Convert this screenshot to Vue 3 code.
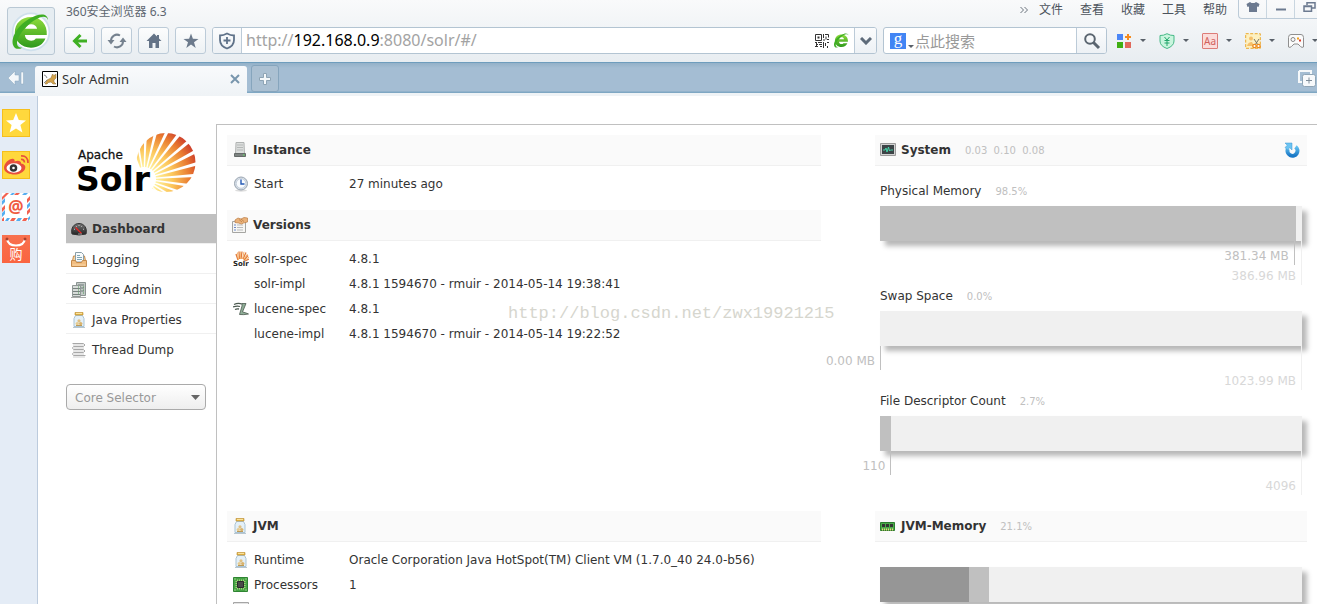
<template>
  <div class="browser">
    <svg class="sprite" aria-hidden="true">
      <defs>
        <linearGradient id="g-green" x1="0" y1="0" x2="0" y2="1">
          <stop offset="0" stop-color="#8fdc3c" />
          <stop offset="1" stop-color="#2f9a1c" />
        </linearGradient>
        <radialGradient id="g-sun" gradientUnits="userSpaceOnUse" cx="68" cy="46" r="64">
          <stop offset="0.2" stop-color="#fff09a" />
          <stop offset="0.45" stop-color="#fcc75c" />
          <stop offset="0.72" stop-color="#e8792f" />
          <stop offset="0.95" stop-color="#c42a2b" />
        </radialGradient>
        <linearGradient id="g-gauge" x1="0" y1="0" x2="0" y2="1">
          <stop offset="0" stop-color="#777" />
          <stop offset="1" stop-color="#222" />
        </linearGradient>
        <linearGradient id="g-refresh" x1="0" y1="0" x2="0" y2="1">
          <stop offset="0" stop-color="#63c1f0" />
          <stop offset="1" stop-color="#1a78c6" />
        </linearGradient>
        <clipPath id="c-sun"><circle cx="90" cy="29.5" r="29.5" /></clipPath>
      </defs>
      <symbol id="i-dashboard" viewBox="0 0 16 16">
        <path d="M1 13C-.5 7 3 2.500 8 2.500S16.500 7 15 13Q8 15 1 13z" fill="url(#g-gauge)" stroke="#333" />
        <path d="M3 8l1 .5M5 5l.7.800M8 4v1M11 5l-.7.800M13 8l-1 .5" stroke="#ddd" stroke-width=".8" />
        <path d="M4.500 6.500l6 6" stroke="#e22" stroke-width="1.200" />
        <path d="M7 12.500h4v1H7z" fill="#999" />
      </symbol>
      <symbol id="i-logging" viewBox="0 0 16 16">
        <path d="M1.500 9l1-5h11l1 5" fill="#f8d7a6" stroke="#c58a4a" />
        <path d="M4.500.5h6l2 2V10h-8z" fill="#f7fafb" stroke="#8a9fa8" />
        <path d="M6 3.500h3M6 5.500h5M6 7.500h5" stroke="#7fa6b5" />
        <path d="M.5 8.500h4l1 2h5l1-2h4v6H.5z" fill="#f2bd80" stroke="#c58a4a" />
        <path d="M1.500 13h13" stroke="#f9d9ab" />
      </symbol>
      <symbol id="i-cores" viewBox="0 0 16 16">
        <path d="M5.500.5h9v13h-9z" fill="#c3c9c7" stroke="#8b9492" />
        <path d="M7 3h6M7 6h6M7 9h6" stroke="#6d7b78" />
        <path d="M1.500 3.500h8v11h-8z" fill="#d8dcda" stroke="#909896" />
        <path d="M2 6.500h7M2 9.500h7M2 12.500h7" stroke="#78827f" />
        <path d="M7 5h1M7 8h1M7 11h1M12 5h1M12 8h1M12 11h1" stroke="#4d9b52" />
        <path d="M0 15.500h15" stroke="#aaa" />
      </symbol>
      <symbol id="i-jar" viewBox="0 0 16 16">
        <path d="M4.500 3.500h7l1.500 3v8H3v-8z" fill="#e4f0f8" stroke="#a9c3d4" />
        <path d="M4 .5h8v2.500H4z" fill="#e9b94c" stroke="#b98a2b" stroke-width=".6" />
        <path d="M5 1.500h6" stroke="#fbe39b" />
        <circle cx="8" cy="8.800" r="1.600" fill="#e0c083" />
        <circle cx="6.300" cy="11.600" r="1.700" fill="#e6cb90" />
        <circle cx="9.700" cy="11.600" r="1.700" fill="#d9b36c" />
        <path d="M5 13.500h6" stroke="#bd9a56" />
        <path d="M2 15.500h12" stroke="#b8c6cf" />
      </symbol>
      <symbol id="i-threads" viewBox="0 0 16 16">
        <g fill="none" stroke="#a8a8a8">
          <path d="M1.500 1.500h11q3 1.500 0 3h-10q-2 1.500 0 3h10q3 1.500 0 3h-10q-2 1.500 0 3h12" />
          <path d="M2 3h11M3 6h10M2 9h11M3 12h10M2 15h12" stroke="#cfcfcf" />
        </g>
      </symbol>
      <symbol id="i-server" viewBox="0 0 16 16">
        <path d="M4 .5h8l.5 12h-9z" fill="#dcdedd" stroke="#b0b3b2" />
        <path d="M5 3h6M5 5.500h6M5 8h6" stroke="#b5b8b7" />
        <path d="M2.500 11.500h11v3h-11z" fill="#7d8381" stroke="#656a68" />
        <path d="M11 13h1.500" stroke="#5be35b" />
      </symbol>
      <symbol id="i-clock" viewBox="0 0 16 16">
        <ellipse cx="8" cy="14.500" rx="6" ry="1.200" fill="#ddd" />
        <circle cx="8" cy="7.500" r="6.500" fill="#d5dde6" stroke="#9aa5b1" />
        <circle cx="8" cy="7.500" r="4.700" fill="#f9fcff" stroke="#b3c0cd" stroke-width=".6" />
        <path d="M8 3.500v4.500h3.500" fill="none" stroke="#2459b5" stroke-width="1.400" />
      </symbol>
      <symbol id="i-versions" viewBox="0 0 16 16">
        <path d="M.5 4.500h13v11H.5z" fill="#f6f6f4" stroke="#a5a5a2" />
        <path d="M2 8h2M2 10.500h2M2 13h2" stroke="#6c87c7" />
        <path d="M5 8h6M5 10.500h6M5 13h6" stroke="#bbb" />
        <path d="M3 3l3-2 3 1 3-1.500 3.500.5v4l-4 1-2 1-3-1-3.500-.5z" fill="#eab27a" stroke="#bb7d45" stroke-width=".7" />
        <path d="M7 2.500l3 2.500M9 2l3 2.500" stroke="#ab6c33" stroke-width=".6" />
      </symbol>
      <symbol id="i-solr" viewBox="0 0 16 16">
        <g stroke="#e27a3b" stroke-width="1.300">
          <path d="M5 9L3 3M6.500 8L6 .5M8 8l1-7.500M10 8l3-6.500M11 9l4-4.500M12 10l4-2" />
        </g>
        <path d="M5.500 9L4.500 1.500M7.300 8V.5M9.500 8L11 .8M10.800 8.500L14.500 3M11.500 9.500L16 6" stroke="#f7b062" stroke-width="1" />
        <text x="0" y="15" class="mini-text">Solr</text>
      </symbol>
      <symbol id="i-lucene" viewBox="0 0 16 16">
        <path d="M1 3.500q4-2 8-.5M0 6q4-1.500 7-.5M2 8.500q2-1 4-.5" fill="none" stroke="#4c5a50" stroke-width="1.300" />
        <path d="M9 2.500h4L9.500 11q3 .5 6 2-5 1-9 .5L9 5z" fill="#8fae97" stroke="#4c5a50" stroke-width=".8" />
      </symbol>
      <symbol id="i-monitor" viewBox="0 0 16 16">
        <path d="M.5 1.500h15v12H.5z" fill="#d2d2d2" stroke="#9a9a9a" />
        <path d="M2 3h12v9H2z" fill="#3c4447" />
        <path d="M3 8h2l1-2 1 4 1.500-5 1 4 1-1h2.500" fill="none" stroke="#45e0b0" stroke-width=".9" />
      </symbol>
      <symbol id="i-memory" viewBox="0 0 16 16">
        <path d="M.5 4.500h14v8H.5z" fill="#4aa84a" stroke="#2b7d2e" />
        <path d="M2 6h3v3H2zM6 6h3v3H6zM10 6h3v3h-3z" fill="#333" />
        <path d="M2 11.500h12" stroke="#f0d67a" stroke-width="2" stroke-dasharray="1 1" />
      </symbol>
      <symbol id="i-chip" viewBox="0 0 16 16">
        <path d="M.5.5h14v14H.5z" fill="#46a446" stroke="#2f8532" />
        <path d="M4 3.500h8M4 11.500h8" stroke="#a9cf7d" stroke-width="2" stroke-dasharray="1 1" />
        <path d="M3.500 4v8M11.500 4v8" stroke="#a9cf7d" stroke-width="2" stroke-dasharray="1 1" />
        <path d="M4.500 4.500h6v6h-6z" fill="#4a4a4a" stroke="#2a2a2a" />
        <path d="M1.500 1.500h1v1h-1zM12.500 1.500h1v1h-1zM1.500 12.500h1v1h-1zM12.500 12.500h1v1h-1z" fill="#e8f5c0" />
      </symbol>
      <symbol id="i-box" viewBox="0 0 16 16">
        <path d="M.5.5h15v15H.5z" fill="#e4e4e4" stroke="#a5a5a5" />
      </symbol>
      <symbol id="i-e" viewBox="0 0 48 48">
        <path d="M24 8C13 8 5.500 15.500 5.500 25.500S13 43 24 43c8 0 14-4 16.500-10.500H29.500c-1.200 1.700-3 2.500-5.300 2.500-4 0-6.700-2.300-7.200-6.500h25C43 16.500 35 8 24 8zM17.300 21.500c.9-3.500 3.400-5.300 6.900-5.300s6 1.800 6.800 5.300z" fill="url(#g-green)" />
        <path d="M43.500 11.500C43 3.500 34 3 22 10 8 18 0 33 4 41c1.500 3.500 6 4.500 10 2-6 0-7.500-4.500-4.500-11C14 22 25 12 34 8.500c5-1.800 8.500-.5 9.500 3z" fill="#3fae24" />
      </symbol>
    </svg>

    <header class="chrome">
      <button class="brand" type="button" aria-label="360">
        <svg width="42" height="42" viewBox="0 0 48 48">
          <circle cx="24" cy="25" r="21" fill="#fff" stroke="#cfe0ec" stroke-width="2" />
          <use href="#i-e" />
        </svg>
      </button>
      <div class="chrome-body">
        <div class="title-row">
          <span class="title">360安全浏览器 6.3</span>
          <nav class="menu">
            <svg width="10" height="10" viewBox="0 0 10 10" fill="none" stroke="#6a727c"><path d="M1.500 2l3 3-3 3M5.500 2l3 3-3 3" /></svg>
            <a v-for="m in menus" :key="m" href="#">{{ m }}</a>
          </nav>
          <div class="win-buttons">
            <button type="button" aria-label="skin">
              <svg width="14" height="14" viewBox="0 0 14 14"><path d="M4 2l1.500 1h3L10 2l3.500 2-1 3-1.500-.5V12H3V6.500L1.500 7l-1-3z" fill="#6c7a90" /></svg>
            </button>
            <button type="button" aria-label="minimize">
              <svg width="14" height="14" viewBox="0 0 14 14"><path d="M2 9.500h10" stroke="#6c7a90" stroke-width="2" /></svg>
            </button>
            <button type="button" aria-label="restore">
              <svg width="14" height="14" viewBox="0 0 14 14" fill="none" stroke="#6c7a90" stroke-width="1.500"><path d="M5 5V2.700h8V8h-3M2 6h7.500v5.300H2zM2 6.500h7.500" /></svg>
            </button>
          </div>
        </div>
        <div class="tool-row">
          <div class="nav-buttons">
            <button type="button" aria-label="back">
              <svg width="16" height="16" viewBox="0 0 16 16" fill="none" stroke="#3fb023" stroke-width="3"><path d="M15 8H3M8.500 2L2.500 8l6 6" /></svg>
            </button>
            <button type="button" aria-label="reload">
              <svg width="20" height="18" viewBox="0 0 20 18" fill="none" stroke="#76828f" stroke-width="2"><path d="M4 9a6 6 0 0 1 9-5.500M16 9a6 6 0 0 1-9 5.500" /><path d="M.5 8h7L4 12.500zM12.500 10h7L16 5.500z" fill="#76828f" stroke="none" /></svg>
            </button>
            <button type="button" aria-label="home">
              <svg width="18" height="18" viewBox="0 0 18 18"><path d="M9 1.500L1.500 9H4v7h3.500v-5h3v5H14V9h2.500L14 6.500V3h-2v1.500z" fill="#647387" /></svg>
            </button>
            <button type="button" aria-label="favorite">
              <svg width="18" height="18" viewBox="0 0 18 18"><path d="M9 1.500l1.900 5.300 5.600.1-4.500 3.400 1.700 5.600L9 12.600l-4.700 3.300L6 10.300 1.500 6.900l5.600-.1z" fill="#6c7a8c" /></svg>
            </button>
          </div>
          <div class="field address">
            <button class="seg left" type="button" aria-label="security">
              <svg width="18" height="18" viewBox="0 0 18 18" fill="none" stroke="#5f7289" stroke-width="1.800"><path d="M9 1.500q3.500 2 7 2V8q0 6-7 8.500Q2 14 2 8V3.500q3.500 0 7-2z" /><path d="M9 5v7M5.500 8.500h7" /></svg>
            </button>
            <div class="url-box">
              <input id="url" v-model="url" class="url" type="text" aria-label="url" />
              <span class="url-text" aria-hidden="true">http://<b>192.168.0.9</b>:8080/solr/#/</span>
            </div>
            <svg width="14" height="14" viewBox="0 0 14 14" fill="none" stroke="#333">
              <path d="M.5.500h6v6h-6zM10 .5h3.500v3M8.500 0v4M11 2.500v3M8 6h2M12 5.500h2M0 8.500h2M3 8.500h4M1 10.500h2M4 10.500h3M0 12.500h3M5 12.500h2M1.500 8v5M8.500 8v6M10.500 9v3M12 8.500h2M12.500 12v2" />
              <path d="M2.500 2.500h2v2h-2z" fill="#333" stroke="none" />
            </svg>
            <svg class="mode" width="15" height="15" viewBox="3 4 42 42"><use href="#i-e" width="48" height="48" /></svg>
            <button class="seg right" type="button" aria-label="history">
              <svg width="12" height="8" viewBox="0 0 12 8" fill="none" stroke="#5e6b7a" stroke-width="3"><path d="M1 1l5 5 5-5" /></svg>
            </button>
          </div>
          <div class="field search">
            <span class="engine">g</span>
            <i class="caret"></i>
            <input type="text" aria-label="搜索" placeholder="点此搜索" />
            <button class="seg go" type="button" aria-label="search">
              <svg width="18" height="18" viewBox="0 0 18 18" fill="none" stroke="#5a6570"><circle cx="7" cy="7" r="4.800" stroke-width="2" /><path d="M10.500 10.500l5.500 5.500" stroke-width="3" /></svg>
            </button>
          </div>
          <div class="extensions">
            <button type="button" aria-label="apps">
              <svg width="16" height="16" viewBox="0 0 16 16"><path d="M1 1h6v6H1z" fill="#4a86f7" /><path d="M12 1v6M9 4h6" stroke="#f58a1e" stroke-width="2" /><path d="M1 9h6v6H1z" fill="#3fae12" /><path d="M9 9h6v6H9z" fill="#e0685a" /></svg>
              <i class="caret"></i>
            </button>
            <button type="button" aria-label="bank">
              <svg width="16" height="16" viewBox="0 0 16 16" fill="#c9f5de" stroke="#45b886"><path d="M8 .7q3.500 2 7 1.800V8q0 5-7 7.500Q1 13 1 8V2.500Q4.500 2.700 8 .7z" /><path d="M5.500 4L8 7l2.500-3M8 7v6M5.500 7.500h5M5.500 10h5" fill="none" stroke="#22a56c" /></svg>
              <i class="caret"></i>
            </button>
            <button type="button" aria-label="translate">
              <span class="aa">Aa</span>
              <i class="caret"></i>
            </button>
            <button type="button" aria-label="screenshot">
              <svg width="16" height="16" viewBox="0 0 16 16"><path d="M.7.700h14.600v14.600H.7z" fill="#fdf0c0" stroke="#eba92e" stroke-dasharray="3 1.500" /><circle cx="6" cy="5.500" r="2" fill="#f6c06a" /><path d="M2 13q1-4 5-4l2 4z" fill="#f6c06a" /><g fill="none" stroke="#7a7668"><path d="M9 6l4 6M14 6l-4 6" /></g><g fill="#fff" stroke="#ec8a1c" stroke-width="1.300"><circle cx="9.500" cy="13" r="1.700" /><circle cx="13.500" cy="13" r="1.700" /></g></svg>
              <i class="caret"></i>
            </button>
            <button type="button" aria-label="games">
              <svg width="16" height="16" viewBox="0 0 16 16"><path d="M3 1.500h10q2.500 0 2.500 3V14q-1.500 1-3-.5L10 11H6l-2.500 2.500Q2 15 .5 14V4.500q0-3 2.500-3z" fill="#fbfbfb" stroke="#8f8f8f" /><circle cx="5" cy="6.500" r="2" fill="none" stroke="#888" /><path d="M9 4.500h2v2H9z" fill="#f1a11c" /><path d="M11 6.500h2v2h-2z" fill="#dc3c2b" /></svg>
              <i class="caret"></i>
            </button>
          </div>
        </div>
      </div>
    </header>

    <div class="tabs">
      <button class="collapse" type="button" aria-label="collapse">
        <svg width="18" height="16" viewBox="0 0 18 16"><path d="M8 1v4h4v6H8v4L1 8zM14 2h2.500v12H14z" fill="#f4f7fa" stroke="#8ba6bc" stroke-width=".5" /></svg>
      </button>
      <div class="tab">
        <svg width="16" height="16" viewBox="0 0 16 16"><path d="M.5.500h15v15H.5z" fill="#fff" stroke="#000" /><path d="M3 13l2-4 4-2 1.500-4 1.500 1.500L14 3v4l-2 2v2l2 2h-3l-2-2-2.500.5L5 13z" fill="#d2a24c" stroke="#8a6c38" stroke-width=".5" /><path d="M2 4q2 0 3 3M2 12l3-3" fill="none" stroke="#888" /></svg>
        <span>Solr Admin</span>
        <button type="button" aria-label="close">
          <svg width="10" height="10" viewBox="0 0 10 10" stroke="#7896ad" stroke-width="2"><path d="M1 1l8 8M9 1L1 9" /></svg>
        </button>
      </div>
      <button class="new-tab" type="button" aria-label="new tab">
        <svg width="12" height="12" viewBox="0 0 12 12"><path d="M4.500.5h3v4h4v3h-4v4h-3v-4h-4v-3h4z" fill="#f5f8fa" stroke="#8ea4b5" /></svg>
      </button>
      <button class="restore-tab" type="button" aria-label="recent tabs">
        <svg width="18" height="18" viewBox="0 0 18 18"><path d="M1 1h12v3M1 1v11h3" fill="none" stroke="#f5f8fa" stroke-width="2" /><rect x="4.500" y="4.500" width="13" height="12" rx="2" fill="#f7f9fb" stroke="#8fa5b6" /><path d="M11 7.500v6M8 10.500h6" stroke="#7f8d99" /></svg>
      </button>
    </div>

    <div class="viewport">
      <aside class="rail">
        <a href="#" class="tile yellow" aria-label="favorites">
          <svg width="28" height="28" viewBox="0 0 28 28"><path d="M14 4l2.800 7 7.200.4-5.600 4.600 2 7.500L14 19.500 7.600 23.500l2-7.500L4 11.400l7.200-.4z" fill="#fff" /></svg>
        </a>
        <a href="#" class="tile yellow" aria-label="weibo">
          <svg width="28" height="28" viewBox="0 0 28 28"><path d="M2 17c0-5 6-10 9.500-9 1.500.5 1.200 2 1 2.500 3-1.500 7-1 6.500 2 4 .8 5 3 4 5.500-1.500 3.500-6 5.500-10.500 5.500S2 21.500 2 17z" fill="#e8503c" /><ellipse cx="12" cy="17" rx="7.500" ry="4.700" fill="#fff" /><circle cx="11.500" cy="17" r="3.800" fill="#333" /><circle cx="11.500" cy="17" r="1.300" fill="#fff" /><path d="M19 8.500q3-.5 3.500 3M19 5q7-.5 7 7" fill="none" stroke="#e8503c" stroke-width="1.700" /></svg>
        </a>
        <a href="#" class="tile mail" aria-label="mail">
          <svg width="28" height="28" viewBox="0 0 28 28">
            <path d="M0 4l4-4h3L0 7zM12 2l2-2h4l-2 2zM28 7l-3 3V6l3-3zM3 16l-3 3v-4l3-3zM28 19l-3 3v-4l3-3zM8 28l2-3h4l-2 3zM20 28l2-3h4l-2 3zM0 28v-2l2-2v4z" fill="#f26150" />
            <path d="M8 2l2-2h3l-2 2zM20 2l2-2h4l-2 2zM3 9l-3 3V8l3-3zM28 13l-3 3v-4l3-3zM3 21l-3 3v-4l3-3zM28 26l-2 2v-3l2-2zM3 28l2-3h3l-2 3zM14 28l2-3h4l-2 3z" fill="#56aef0" />
            <text x="14" y="20" text-anchor="middle" class="at">@</text>
          </svg>
        </a>
        <a href="#" class="tile shop" aria-label="shop">
          <svg width="28" height="28" viewBox="0 0 28 28"><path d="M5 4q1 6.500 9 6.500T23 4" fill="none" stroke="#fff" stroke-width="2" /><circle cx="5" cy="4" r="1.500" fill="#a8402c" /><circle cx="23" cy="4" r="1.500" fill="#a8402c" /><text x="14" y="24" text-anchor="middle" class="buy">购</text></svg>
        </a>
      </aside>

      <div class="page">
        <div class="side">
          <a href="#" class="logo" aria-label="Apache Solr">
            <svg width="120" height="62" viewBox="0 0 120 62">
              <g clip-path="url(#c-sun)">
                <path v-for="(d, i) in rays" :key="i" :d="d" fill="url(#g-sun)" />
              </g>
              <text x="2" y="26" class="logo-small">Apache</text>
              <text x="0" y="58" class="logo-big">Solr</text>
            </svg>
          </a>
          <ul class="nav">
            <li v-for="n in nav" :key="n.label" :class="{ active: n.active }">
              <a href="#"><svg width="16" height="16"><use :href="'#' + n.icon" /></svg>{{ n.label }}</a>
            </li>
          </ul>
          <div class="selector">
            <select aria-label="Core Selector">
              <option>Core Selector</option>
            </select>
            <i class="arrow"></i>
          </div>
        </div>

        <main class="content">
          <div class="row first">
            <div class="col-left">
              <section v-for="b in topBlocks" :key="b.title" class="block">
                <h2><svg width="16" height="16"><use :href="'#' + b.icon" /></svg>{{ b.title }}</h2>
                <dl>
                  <div v-for="r in b.rows" :key="r.label">
                    <svg width="16" height="16"><use v-if="r.icon" :href="'#' + r.icon" /></svg>
                    <dt>{{ r.label }}</dt>
                    <dd>{{ r.value }}</dd>
                  </div>
                </dl>
              </section>
            </div>
            <section class="col-right">
              <h2>
                <svg width="16" height="16"><use href="#i-monitor" /></svg>System
                <small>0.03&nbsp; 0.10&nbsp; 0.08</small>
                <button class="refresh" type="button" aria-label="refresh">
                  <svg width="16" height="16" viewBox="0 0 16 16"><path d="M3.800 7a5 5 0 1 0 7.700-2.200" fill="none" stroke="url(#g-refresh)" stroke-width="4" /><path d="M1 1h7v7L5.800 5.800 3.500 8 1 5.500l2.300-2.200z" fill="#6cc4f2" stroke="#3f97d0" stroke-width=".5" /></svg>
                </button>
              </h2>
              <div class="meters">
                <div v-for="m in meters" :key="m.label" class="meter">
                  <p>{{ m.label }}<small>{{ m.percent }}%</small></p>
                  <div class="bar"><div class="used" :style="{ width: m.percent + '%' }"></div></div>
                  <div class="values">
                    <div class="val-used" :style="{ width: m.percent + '%' }"><span>{{ m.used }}</span></div>
                    <div class="val-max">{{ m.total }}</div>
                  </div>
                </div>
              </div>
            </section>
          </div>

          <div class="row">
            <section class="col-left block">
              <h2><svg width="16" height="16"><use href="#i-jar" /></svg>JVM</h2>
              <dl>
                <div v-for="r in jvmRows" :key="r.label">
                  <svg width="16" height="16"><use :href="'#' + r.icon" /></svg>
                  <dt>{{ r.label }}</dt>
                  <dd>{{ r.value }}</dd>
                </div>
              </dl>
            </section>
            <section class="col-right">
              <h2><svg width="16" height="16"><use href="#i-memory" /></svg>JVM-Memory <small>21.1%</small></h2>
              <div class="meters jvm">
                <div class="bar">
                  <div class="used total" :style="{ width: '25.8%' }"></div>
                  <div class="used dark" :style="{ width: '21.1%' }"></div>
                </div>
              </div>
            </section>
          </div>
          <div class="watermark">http://blog.csdn.net/zwx19921215</div>
        </main>
      </div>
    </div>
  </div>
</template>

<script setup>
import { ref } from 'vue'

const url = ref('http://192.168.0.9:8080/solr/#/')
const menus = ['文件', '查看', '收藏', '工具', '帮助']

const nav = [
  { label: 'Dashboard', icon: 'i-dashboard', active: true },
  { label: 'Logging', icon: 'i-logging' },
  { label: 'Core Admin', icon: 'i-cores' },
  { label: 'Java Properties', icon: 'i-jar' },
  { label: 'Thread Dump', icon: 'i-threads' }
]

const topBlocks = [
  {
    title: 'Instance',
    icon: 'i-server',
    rows: [{ label: 'Start', value: '27 minutes ago', icon: 'i-clock' }]
  },
  {
    title: 'Versions',
    icon: 'i-versions',
    rows: [
      { label: 'solr-spec', value: '4.8.1', icon: 'i-solr' },
      { label: 'solr-impl', value: '4.8.1 1594670 - rmuir - 2014-05-14 19:38:41' },
      { label: 'lucene-spec', value: '4.8.1', icon: 'i-lucene' },
      { label: 'lucene-impl', value: '4.8.1 1594670 - rmuir - 2014-05-14 19:22:52' }
    ]
  }
]

const jvmRows = [
  { label: 'Runtime', value: 'Oracle Corporation Java HotSpot(TM) Client VM (1.7.0_40 24.0-b56)', icon: 'i-jar' },
  { label: 'Processors', value: '1', icon: 'i-chip' },
  { label: '', value: '', icon: 'i-box' }
]

const meters = [
  { label: 'Physical Memory', percent: '98.5', used: '381.34 MB', total: '386.96 MB' },
  { label: 'Swap Space', percent: '0.0', used: '0.00 MB', total: '1023.99 MB' },
  { label: 'File Descriptor Count', percent: '2.7', used: '110', total: '4096' }
]

// sun rays of the logo: wedges fanning out from one focus point
const rays = []
for (let a = -106; a <= 50; a += 12) {
  const at = (deg, r) => {
    const t = (deg * Math.PI) / 180
    return (68 + r * Math.cos(t)).toFixed(1) + ' ' + (46 + r * Math.sin(t)).toFixed(1)
  }
  rays.push(`M${at(a - 3, 12)}L${at(a - 4.3, 64)}L${at(a + 4.3, 64)}L${at(a + 3, 12)}z`)
}
</script>

<style>
body {
  margin: 0;
  background: #fff;
}
</style>

<style scoped>
* {
  box-sizing: border-box;
}

.browser {
  height: 100vh;
  display: flex;
  flex-direction: column;
  overflow: hidden;
  font-family: "Noto Sans", "Noto Sans CJK SC", sans-serif;
  font-size: 12px;
  color: #333;
}

.sprite {
  position: absolute;
  width: 0;
  height: 0;
}

button {
  padding: 0;
  border: 0;
  background: none;
  font: inherit;
}

svg {
  display: block;
  flex-shrink: 0;
}

a {
  color: inherit;
  text-decoration: none;
}

/* ========== browser chrome ========== */
.chrome {
  display: flex;
  height: 62px;
  flex-shrink: 0;
  background: linear-gradient(#f9fafb, #e8edf1);
}

.brand {
  width: 48px;
  height: 48px;
  margin: 7px 9px 0 7px;
  display: flex;
  align-items: center;
  justify-content: center;
  border: 1px solid #b9c8d4;
  border-radius: 3px;
  background: #e6edf2;
}

.chrome-body {
  flex: 1;
  min-width: 0;
}

.title-row {
  display: flex;
  height: 27px;
}

.title {
  flex: 1;
  padding-left: 2px;
  line-height: 23px;
  color: #5d6670;
}

.menu {
  display: flex;
  gap: 17px;
  line-height: 20px;
  margin-right: 11px;
  color: #4c535c;
}

.menu svg {
  margin: 5px -7px 0 0;
}

.win-buttons {
  display: flex;
  width: 79px;
  height: 19px;
  overflow: hidden;
  border: 1px solid #bccbd8;
  border-width: 0 0 1px 1px;
  border-radius: 0 0 0 4px;
}

.win-buttons button {
  width: 28px;
  flex-shrink: 0;
  display: flex;
  justify-content: center;
  border-right: 1px solid #c9d6e0;
}

.tool-row {
  display: flex;
  height: 27px;
}

.nav-buttons {
  display: flex;
  gap: 6px;
}

.nav-buttons button {
  width: 31px;
  display: flex;
  align-items: center;
  justify-content: center;
  border: 1px solid #bccbd8;
  border-radius: 3px;
  background: linear-gradient(#fcfdfd, #edf1f4);
}

.field {
  display: flex;
  align-items: center;
  margin-left: 6px;
  border: 1px solid #b3c4d2;
  border-radius: 3px;
  background: #fff;
  overflow: hidden;
}

.address {
  flex: 1;
  min-width: 0;
}

.seg {
  align-self: stretch;
  display: flex;
  align-items: center;
  justify-content: center;
  background: linear-gradient(#fbfcfd, #edf1f5);
}

.seg.left {
  width: 29px;
  border-right: 1px solid #bccbd8;
}

.seg.right {
  width: 22px;
  border-left: 1px solid #bccbd8;
}

.seg.go {
  width: 30px;
  border-left: 1px solid #bccbd8;
}

.mode {
  margin: 0 5px;
}

.url-box {
  position: relative;
  flex: 1;
  min-width: 0;
  height: 25px;
  font-size: 16px;
  line-height: 25px;
}

.url {
  width: 100%;
  height: 25px;
  padding: 0 4px;
  border: 0;
  outline: 0;
  background: none;
  font: inherit;
  color: transparent;
}

.url-text {
  position: absolute;
  left: 4px;
  top: 0;
  color: #a3a3a3;
  pointer-events: none;
}

.url-text b {
  font-weight: 400;
  color: #000;
}

.search {
  width: 224px;
}

.search input {
  flex: 1;
  min-width: 0;
  padding: 0;
  border: 0;
  outline: 0;
  font: inherit;
  font-size: 15px;
  background: none;
}

.search input::placeholder {
  color: #999;
}

.engine {
  width: 16px;
  height: 16px;
  margin-left: 6px;
  background: #4285f4;
  color: #fff;
  font: 17px/12px "Liberation Serif", serif;
  text-align: center;
}

.caret {
  width: 6px;
  height: 3px;
  background: #596069;
  clip-path: polygon(0 0, 100% 0, 50% 100%);
}

.search .caret {
  margin: 12px 1px 0 2px;
}

.extensions {
  display: flex;
  width: 210px;
  padding-left: 9px;
  overflow: hidden;
}

.extensions button {
  display: flex;
  align-items: center;
  flex-shrink: 0;
  width: 43px;
  gap: 8px;
}

.aa {
  width: 16px;
  height: 16px;
  border: 1px solid #dd7c78;
  border-radius: 1px;
  background: #fbdcda;
  color: #d0615d;
  font-size: 10px;
  line-height: 14px;
  text-align: center;
}

/* ========== tab strip ========== */
.tabs {
  position: relative;
  display: flex;
  height: 34px;
  flex-shrink: 0;
  border-top: 1px solid #6e9dbd;
  border-bottom: 3px solid #eff3f6;
  background: linear-gradient(#93b1c8, #a4bdd3 5px, #a4bdd3 28px, #7fa7c3 29px);
}

.collapse {
  width: 35px;
  height: 30px;
  padding: 0 0 0 7px;
}

.tab {
  display: flex;
  align-items: center;
  width: 212px;
  margin: 3px 4px -2px 0;
  padding: 0 7px 3px;
  gap: 4px;
  border-radius: 3px 3px 0 0;
  background: linear-gradient(#f9fafc, #eff3f6);
  font-size: 13px;
}

.tab span {
  flex: 1;
}

.new-tab {
  width: 28px;
  height: 27px;
  margin-top: 2px;
  display: flex;
  align-items: center;
  justify-content: center;
  border: 1px solid #86a5bd;
  border-radius: 3px;
  background: #abc0d2;
}

.restore-tab {
  height: 32px;
  margin: 0 1px 0 auto;
}

/* ========== left rail ========== */
.viewport {
  display: flex;
  flex: 1;
  min-height: 0;
}

.rail {
  width: 38px;
  flex-shrink: 0;
  display: flex;
  flex-direction: column;
  gap: 14px;
  padding: 13px 0 0 2px;
  border-right: 1px solid #bccbdd;
  background: #e4ecf6;
}

.tile {
  width: 28px;
  height: 28px;
  overflow: hidden;
}

.yellow {
  background: #ffd83d;
  box-shadow: inset 0 0 0 1px #f5bf1d;
}

.mail {
  background: #fff;
}

.shop {
  background: linear-gradient(#f8714f, #fa6440);
}

.at {
  font: bold 17px "Noto Sans", sans-serif;
  fill: #f05a42;
}

.buy {
  font: 13px "Noto Sans CJK SC", sans-serif;
  fill: #fff;
}

.mini-text {
  font: bold 7px "DejaVu Sans", sans-serif;
  fill: #222;
}

/* ========== solr page ========== */
.page {
  flex: 1;
  min-width: 0;
  display: flex;
  padding: 28px 0 0 28px;
  font-family: "DejaVu Sans", Verdana, sans-serif;
  font-size: 12px;
}

.side {
  width: 150px;
  flex-shrink: 0;
}

.logo {
  display: block;
  height: 90px;
  padding: 9px 0 0 10px;
}

.logo svg {
  overflow: visible;
}

.logo-small {
  font: 12px "DejaVu Sans", sans-serif;
  fill: #111;
  stroke: #111;
  stroke-width: 0.3px;
}

.logo-big {
  font: bold 33px "DejaVu Sans", sans-serif;
  fill: #000;
}

.nav {
  margin: 0;
  padding: 0;
  list-style: none;
}

.nav a {
  display: flex;
  align-items: center;
  gap: 5px;
  height: 30px;
  padding: 2px 0 0 5px;
  border-bottom: 1px solid #f0f0f0;
}

.nav li:last-child a {
  border-bottom: 0;
}

.nav .active a {
  padding-top: 0;
  background: #c0c0c0;
  font-weight: bold;
}

.selector {
  position: relative;
  width: 140px;
  margin-top: 20px;
}

.selector select {
  width: 100%;
  height: 26px;
  padding: 1px 8px 0;
  border: 1px solid #aaa;
  border-radius: 4px;
  appearance: none;
  background: linear-gradient(#fff, #eee);
  color: #999;
  font: inherit;
}

.arrow {
  position: absolute;
  right: 6px;
  top: 11px;
  width: 9px;
  height: 5px;
  background: #666;
  clip-path: polygon(0 0, 100% 0, 50% 100%);
  pointer-events: none;
}

.content {
  position: relative;
  flex: 1;
  min-width: 0;
  padding: 10px;
  border: 1px solid #c0c0c0;
  border-width: 1px 0 0 1px;
}

.row {
  display: flex;
  justify-content: space-between;
}

.first {
  margin-bottom: 16px;
}

.col-left {
  width: 55%;
}

.col-right {
  width: 40%;
}

h2 {
  display: flex;
  align-items: center;
  gap: 5px;
  height: 31px;
  margin: 0;
  padding: 0 7px 0 5px;
  border-bottom: 1px solid #f0f0f0;
  background: #fafafa;
  font-size: 12px;
  font-weight: bold;
}

small {
  margin-left: 9px;
  font-size: 10px;
  font-weight: normal;
  color: #c0c0c0;
}

.refresh {
  margin-left: auto;
}

dl {
  margin: 0;
  padding: 5px 0 14px 6px;
}

dl div {
  display: flex;
  align-items: center;
  gap: 5px;
  height: 25px;
}

dt {
  width: 90px;
}

dd {
  margin: 0;
}

.meters {
  padding: 14px 5px 0;
}

.jvm {
  padding-top: 25px;
}

.meter p {
  height: 26px;
  margin: 0;
  line-height: 22px;
}

.meter small {
  margin-left: 14px;
}

.bar {
  display: grid;
  height: 35px;
  background: #f0f0f0;
  box-shadow: 5px 5px 5px #b8b8b8;
}

.used {
  grid-area: 1 / 1;
  background: #c0c0c0;
}

.dark {
  background: #969696;
}

.values {
  position: relative;
  height: 44px;
  border-right: 1px solid #f0f0f0;
}

.val-used {
  display: flex;
  justify-content: flex-end;
  height: 24px;
  border-right: 1px solid #c0c0c0;
  line-height: 30px;
  white-space: nowrap;
  color: #c0c0c0;
}

.val-used span {
  padding-right: 5px;
}

.val-max {
  padding-right: 5px;
  line-height: 22px;
  text-align: right;
  color: #d8d8d8;
}

.watermark {
  position: absolute;
  left: 291px;
  top: 179px;
  font: 17px/20px "Liberation Mono", monospace;
  color: #d6d6ce;
  pointer-events: none;
}
</style>
